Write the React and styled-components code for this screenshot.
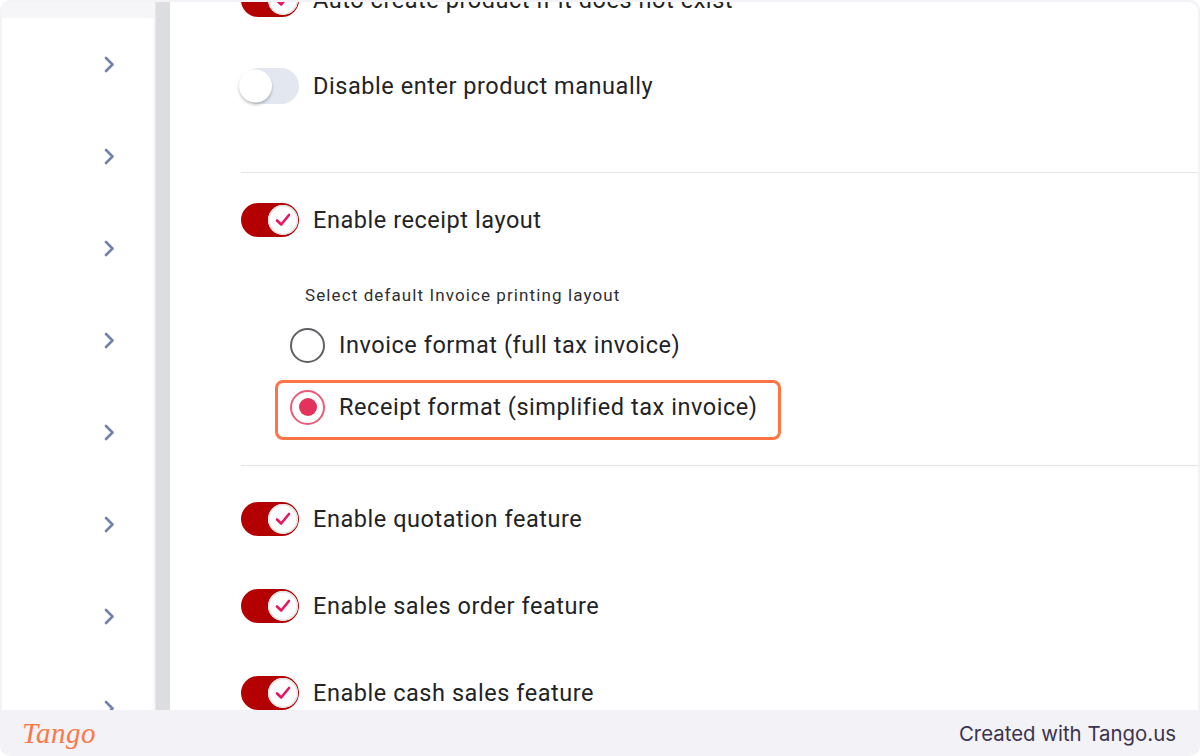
import React from "react"
import styled, { createGlobalStyle } from "styled-components"

const GlobalStyle = createGlobalStyle`
  html, body {
    margin: 0;
    padding: 0;
    background: #ffffff;
  }
  #root {
    height: 756px;
  }
`

const Frame = styled.div`
  width: 1200px;
  height: 756px;
  box-sizing: border-box;
  background: #f3f2f7;
  border-radius: 10px;
  padding: 2px 2px 0 2px;
  display: flex;
  flex-direction: column;
  overflow: hidden;
`

const Shot = styled.div`
  flex: 1;
  display: flex;
  background: #ffffff;
  border-radius: 0 10px 0 0;
  overflow: hidden;
`

const Sidebar = styled.div`
  width: 153px;
  display: flex;
  flex-direction: column;
  background: #ffffff;
  box-shadow: inset -3px 0 4px -3px rgba(0, 0, 0, 0.08);
`

const SidebarTop = styled.div`
  height: 16px;
  flex-shrink: 0;
  background: #f6f6f8;
`

const SidebarItem = styled.div`
  height: 92px;
  flex-shrink: 0;
  display: flex;
  align-items: center;
  justify-content: flex-end;
  padding-right: 40px;
`

const Gutter = styled.div`
  width: 14px;
  background: #dcdde0;
  border-left: 1px solid #e8e8eb;
`

const Main = styled.div`
  flex: 1;
  overflow: hidden;
  padding-left: 71px;
  font-family: Roboto, "Liberation Sans", sans-serif;
  color: #222326;
`

const Scroller = styled.div`
  margin-top: -30px;
  display: flex;
  flex-direction: column;
`

const Section = styled.div`
  display: flex;
  flex-direction: column;
  gap: ${({ $gap }) => $gap}px;
  padding: ${({ $pad }) => $pad};
`

const Divider = styled.div`
  height: 1px;
  background: #e4e4e6;
`

const Row = styled.div`
  height: 56px;
  display: flex;
  align-items: center;
  gap: 14px;
  font-size: 23.5px;
  letter-spacing: 0.55px;
`

const Track = styled.div`
  position: relative;
  width: 58px;
  height: ${({ $on }) => ($on ? 34 : 36)}px;
  border-radius: 18px;
  background: ${({ $on }) => ($on ? "#b30000" : "#e2e7f0")};
  flex-shrink: 0;
`

const Knob = styled.div`
  position: absolute;
  top: 50%;
  transform: translateY(-50%);
  ${({ $on }) => ($on ? "right: 1px;" : "left: -2px;")}
  width: ${({ $on }) => ($on ? 30 : 33)}px;
  height: ${({ $on }) => ($on ? 30 : 33)}px;
  border-radius: 50%;
  background: #ffffff;
  box-shadow: ${({ $on }) =>
    $on ? "inset 0 0 0 1.5px #e4e2e4" : "0 2px 3px rgba(0,0,0,0.25)"};
  display: flex;
  align-items: center;
  justify-content: center;
`

const Caption = styled.div`
  font-size: 17px;
  letter-spacing: 1.1px;
  color: #2e2f33;
  padding-left: 64px;
  height: 20px;
  line-height: 20px;
  margin-top: ${({ $top }) => $top}px;
  margin-bottom: ${({ $bottom }) => $bottom}px;
`

const RadioRow = styled.div`
  position: relative;
  height: 50px;
  display: flex;
  align-items: center;
  gap: 14px;
  padding-left: 49px;
  margin-top: ${({ $top }) => $top || 0}px;
  font-size: 23.5px;
  letter-spacing: 0.55px;

  ${({ $highlight }) =>
    $highlight &&
    `
    &::after {
      content: "";
      position: absolute;
      left: 34px;
      top: -2px;
      width: 506px;
      height: 60px;
      box-sizing: border-box;
      border: 3.5px solid #ff7443;
      border-radius: 8px;
    }
  `}
`

const RadioCircle = styled.div`
  width: 35px;
  height: 35px;
  box-sizing: border-box;
  border-radius: 50%;
  border: 2px solid ${({ $checked }) => ($checked ? "#ec5a7a" : "#5f6064")};
  display: flex;
  align-items: center;
  justify-content: center;
  flex-shrink: 0;

  &::before {
    content: "";
    display: ${({ $checked }) => ($checked ? "block" : "none")};
    width: 18px;
    height: 18px;
    border-radius: 50%;
    background: #e3325c;
  }
`

const Footer = styled.div`
  height: 46px;
  flex-shrink: 0;
  display: flex;
  align-items: center;
  justify-content: space-between;
  padding: 0 22px 0 20px;
`

const TangoMark = styled.span`
  font-family: "Liberation Serif", "DejaVu Serif", serif;
  font-style: italic;
  font-size: 29px;
  color: #fb7848;
  letter-spacing: 0.5px;
`

const Credit = styled.span`
  font-family: Inter, "Liberation Sans", sans-serif;
  font-size: 20.4px;
  color: #3b3350;
`

const Chevron = () => (
  <svg width="11" height="17" viewBox="0 0 11 17">
    <polyline
      points="2,2 8.5,8.5 2,15"
      fill="none"
      stroke="#7081ad"
      strokeWidth="2.6"
      strokeLinecap="round"
      strokeLinejoin="round"
    />
  </svg>
)

const Check = () => (
  <svg width="20" height="20" viewBox="0 0 20 20">
    <polyline
      points="4,10.5 8.2,14.5 16,5"
      fill="none"
      stroke="#e8175d"
      strokeWidth="2.6"
      strokeLinecap="round"
      strokeLinejoin="round"
    />
  </svg>
)

const Toggle = ({ on }) => (
  <Track $on={on}>
    <Knob $on={on}>{on && <Check />}</Knob>
  </Track>
)

const ToggleRow = ({ on, label }) => (
  <Row>
    <Toggle on={on} />
    <span>{label}</span>
  </Row>
)

const Radio = ({ checked, label, top }) => (
  <RadioRow $highlight={checked} $top={top}>
    <RadioCircle $checked={checked} />
    <span>{label}</span>
  </RadioRow>
)

const App = () => {
  return (
    <>
      <GlobalStyle />
      <Frame>
        <Shot>
          <Sidebar>
            <SidebarTop />
            {Array.from({ length: 8 }).map((_, i) => (
              <SidebarItem key={i}>
                <Chevron />
              </SidebarItem>
            ))}
          </Sidebar>
          <Gutter />
          <Main>
            <Scroller>
              <Section $gap={30} $pad="0 0 58px">
                <ToggleRow on label="Auto create product if it does not exist" />
                <ToggleRow label="Disable enter product manually" />
              </Section>
              <Divider />
              <Section $gap={0} $pad="19px 0 33px">
                <ToggleRow on label="Enable receipt layout" />
                <Caption $top={37} $bottom={15}>
                  Select default Invoice printing layout
                </Caption>
                <Radio label="Invoice format (full tax invoice)" />
                <Radio checked top={12} label="Receipt format (simplified tax invoice)" />
              </Section>
              <Divider />
              <Section $gap={31} $pad="25px 0 0">
                <ToggleRow on label="Enable quotation feature" />
                <ToggleRow on label="Enable sales order feature" />
                <ToggleRow on label="Enable cash sales feature" />
              </Section>
            </Scroller>
          </Main>
        </Shot>
        <Footer>
          <TangoMark>Tango</TangoMark>
          <Credit>Created with Tango.us</Credit>
        </Footer>
      </Frame>
    </>
  )
}

export default App
